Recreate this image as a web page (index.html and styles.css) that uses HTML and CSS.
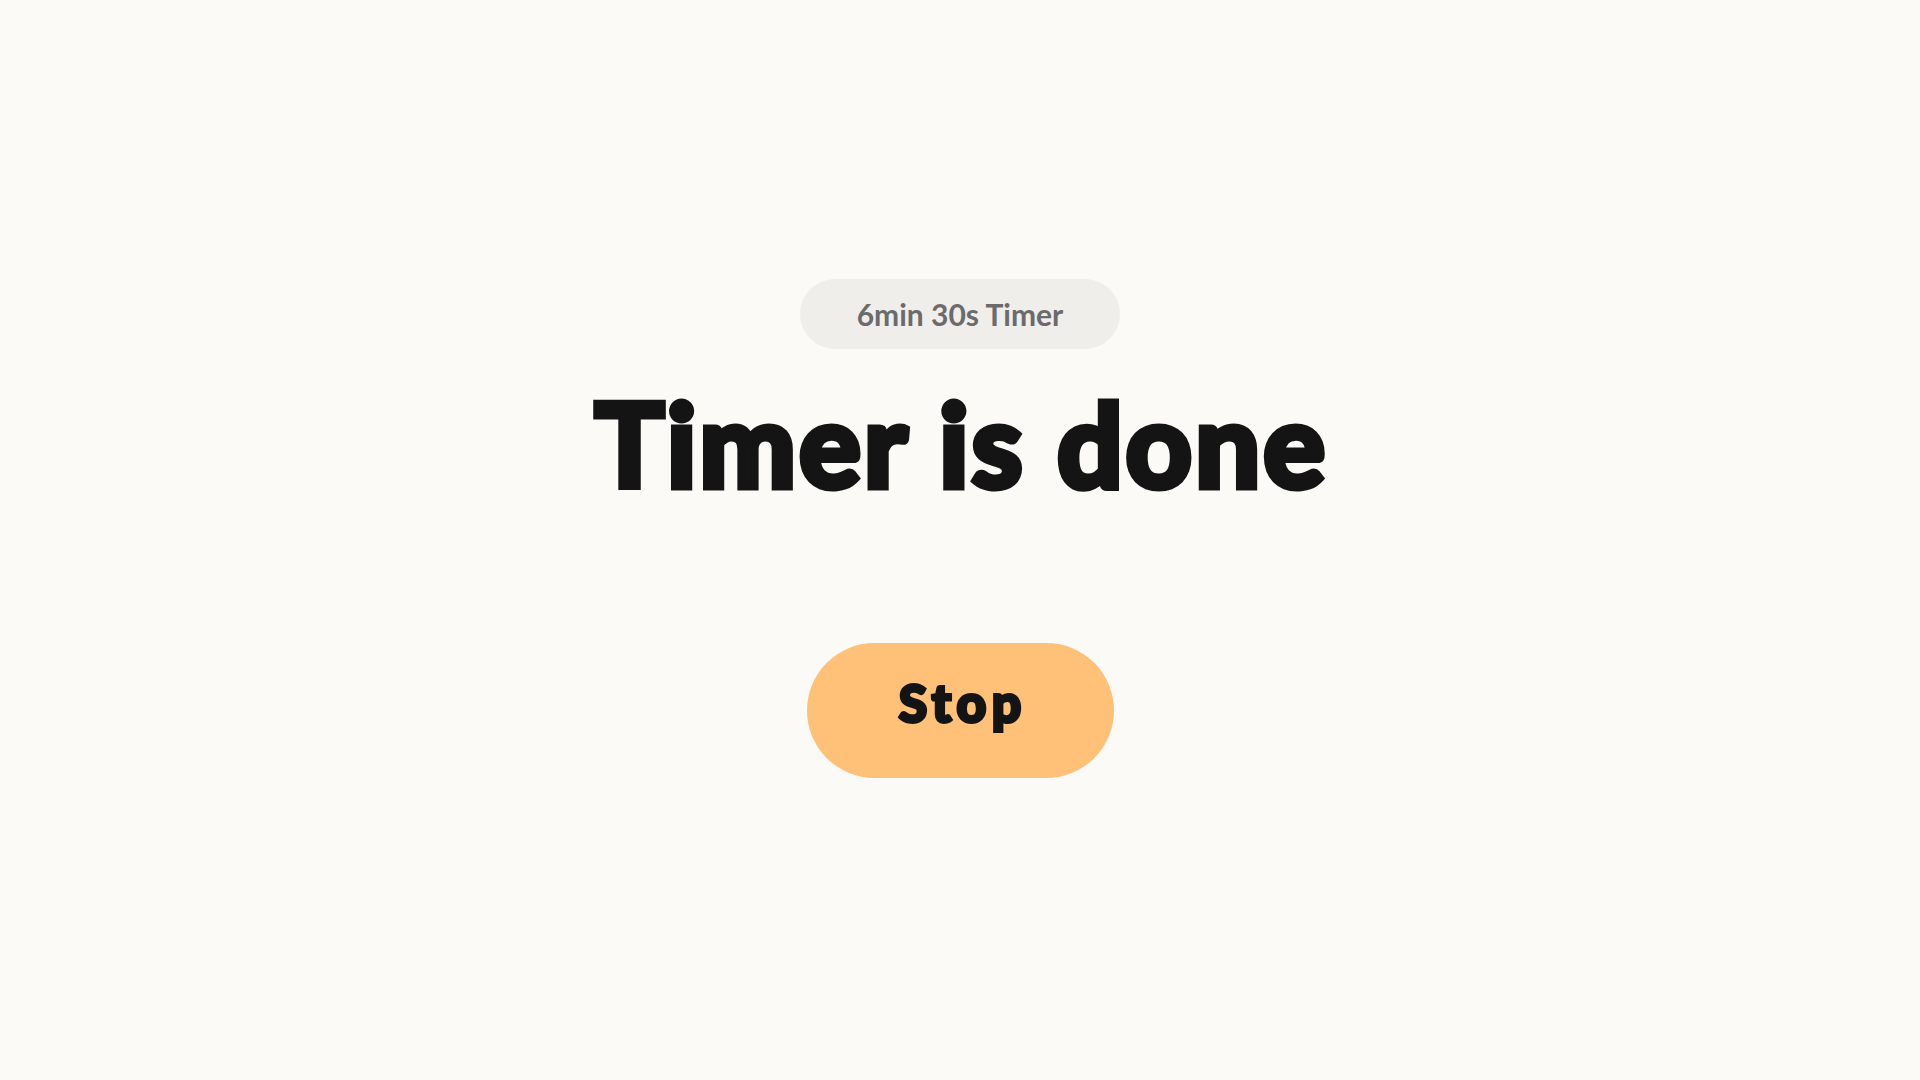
FILE: index.html
```html
<!DOCTYPE html>
<html lang="en">
<head>
<meta charset="utf-8">
<title>Timer is done</title>
<link rel="stylesheet" href="styles.css">
</head>
<body>
<main class="screen">
  <div class="label">6min 30s Timer</div>
  <h1 class="title">Timer is done</h1>
  <button class="stop" type="button">Stop</button>
</main>
</body>
</html>
```

FILE: styles.css
```css
html, body {
  margin: 0;
  padding: 0;
  background: #fbfaf7;
}
body {
  font-family: Lato, "Noto Sans", sans-serif;
  color: #141414;
}
.screen {
  min-height: 100vh;
  box-sizing: border-box;
  display: flex;
  flex-direction: column;
  align-items: center;
  padding-top: 279px;
}
.label {
  height: 70px;
  box-sizing: border-box;
  padding: 0 57px;
  display: flex;
  align-items: center;
  border-radius: 35px;
  background: #efeeeb;
  color: #6b6b6b;
  font-family: Lato, "Noto Sans", sans-serif;
  font-size: 30px;
  font-weight: 700;
}
.title {
  margin: 24px 0 0;
  font-family: Lato, "Noto Sans", sans-serif;
  font-size: 115px;
  font-weight: 700;
  line-height: 1.2;
  letter-spacing: 3.4px;
  text-indent: 3.4px;
  -webkit-text-stroke: 7px #141414;
  color: #141414;
}
.stop {
  margin-top: 132px;
  width: 307px;
  height: 135px;
  box-sizing: border-box;
  border: none;
  border-radius: 68px;
  background: #ffc078;
  color: #141414;
  font-family: Lato, "Noto Sans", sans-serif;
  font-size: 51px;
  font-weight: 700;
  letter-spacing: 6px;
  text-indent: 6px;
  -webkit-text-stroke: 4px #141414;
  padding: 0 0 16px;
  cursor: pointer;
}
```
